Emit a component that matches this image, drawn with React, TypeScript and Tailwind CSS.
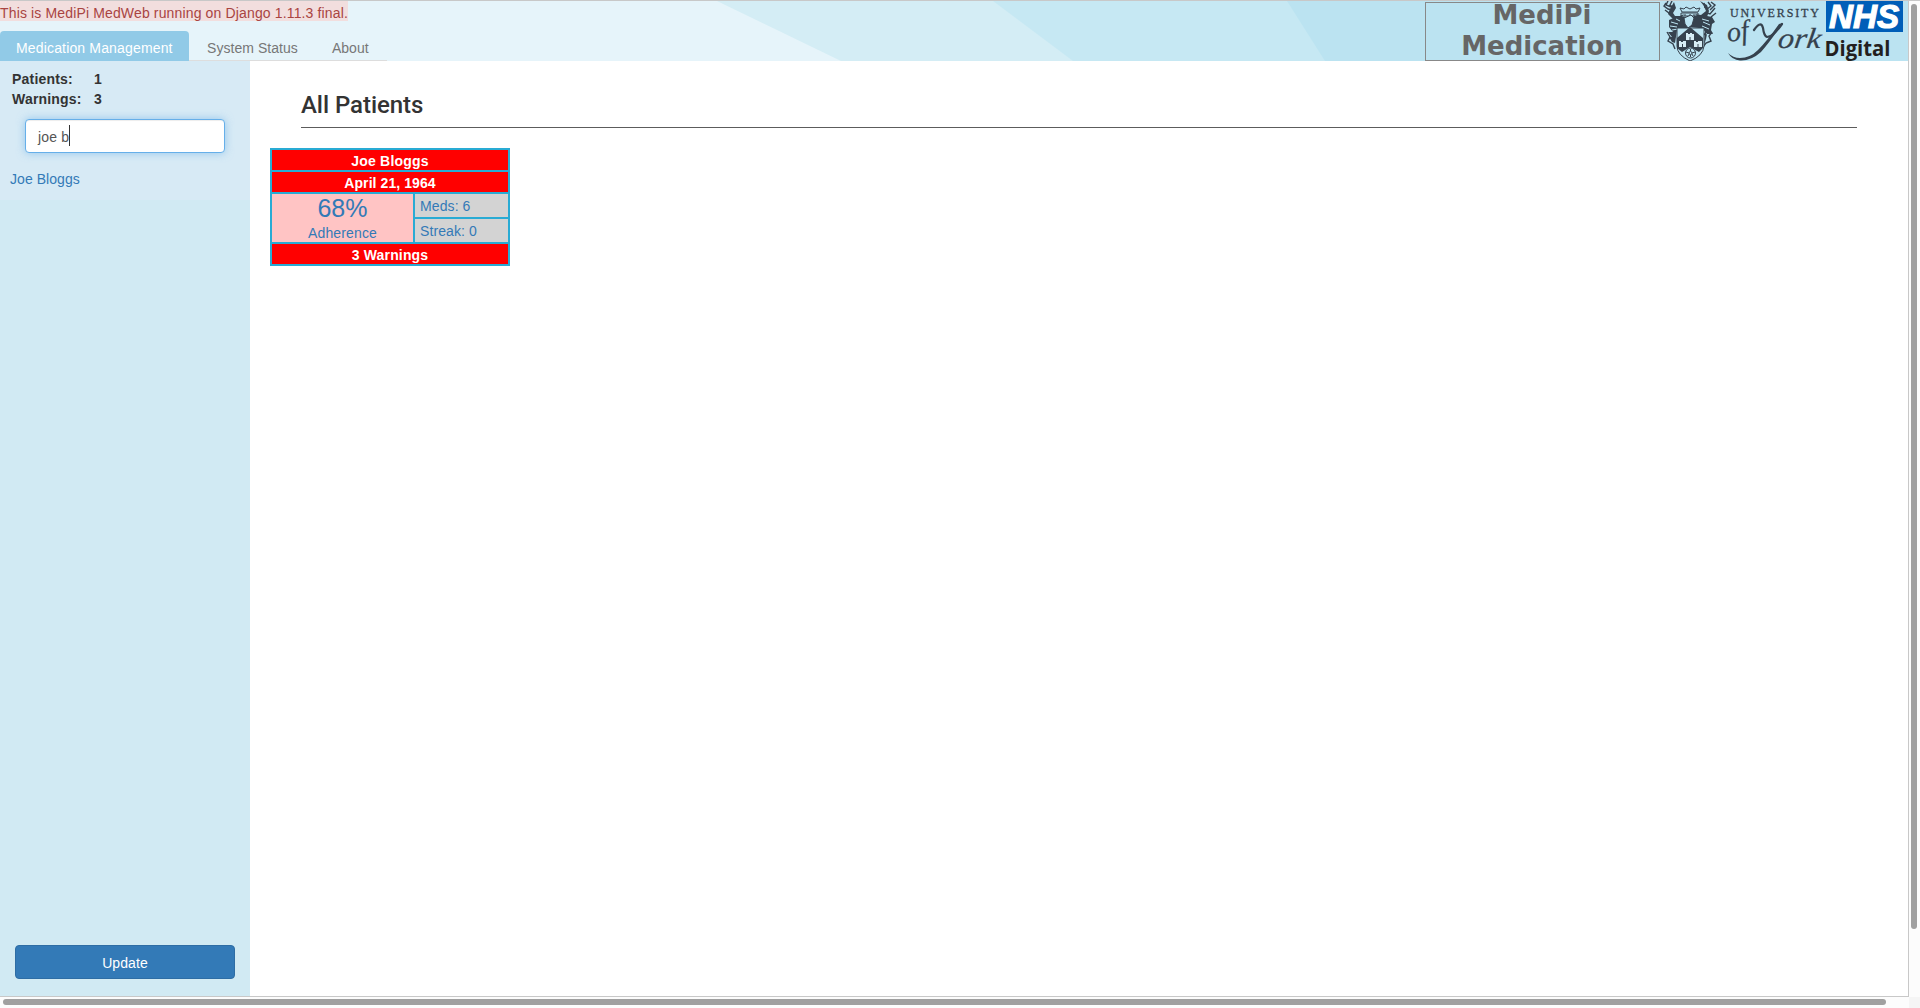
import React from "react";

function Crest() {
  return (
    <svg className="block h-[60px] w-[54px] shrink-0" viewBox="0 0 54 60" fill="none" stroke="#36424e" strokeWidth="1">
      <path d="M3 2 1 5l4 3 4 1M5 0 3 4l5 2M9 0 7 4l4 3M2 9l4 3 3 0M48 1l4 3-5 5M45 1l3 4-5 4M52 7l-5 6-3-1M53 12l-5 4M41 2l1 5" strokeWidth="1.4" />
      <path d="M11 1 7 8 5 13l5 5 8-1 3-4-4 2-5 0-2-3 3-5zM37 0l4 5 2 5-5 4-6-1 4 4 8-1 2-6-2-6z" fill="#36424e" stroke="none" />
      <path d="M6 19l9-4 8 1 4 5 4-6 8-1 10 2 3 5-3 2-1 6 2 4-6 0-1 5-2 6 1-14-6-3-9-1-4 2-9 1-2 13-3-1-3-5 3 0-4-5 5 0-4-5z" fill="#36424e" stroke="none" />
      <path d="M17 7l2 4h16l2-4-4 1-2-2-4 2-4-2-2 2zM18 12h17v3H18zM22 13v2M27 13v2M31 13v2" />
      <path d="M21 17l7-3 3 3-2 7-4 3-3-4z" fill="#bce4f2" />
      <path d="M8 21l7 2M7 25l7 1M9 29l6-1M39 18l7 2M40 21l7 3M39 25l7 3M40 31l4 2M13 18l4 2" stroke="#bce4f2" />
      <path d="M4 31l3 5-2 4 5 3 2 5M49 31l-3 4 2 5-5 2-3 4M8 33l4 4M45 29l-4 5" strokeWidth="1.4" />
      <path d="M14 27h27v18q-1 10-14 15Q14 54 14 45z" fill="#bce4f2" />
      <path d="M27 26 14 37v10h26V37zM14 47l5 4 8-5 9 5 4-4z" fill="#36424e" stroke="none" />
      <path d="M23 32h2v1h2v-1h2v1h2v6h-8zM16 40h2v1h2v-1h3v6h-7zM31 40h2v1h2v-1h4v6h-8z" fill="#d7edf5" stroke="none" />
      <path d="M27 36v3M19.500 43v3M35 43v3" />
      <circle cx="27.500" cy="52" r="5" fill="#bce4f2" />
      <circle cx="27.500" cy="52" r="1.500" />
      <path d="M27.500 48v2M27.500 54v2M23 51l3 1M32 51l-3 1M25 55l1-2M30 55l-1-2" />
    </svg>
  );
}

function YorkLogo() {
  return (
    <svg className="ml-[10px] block h-[60px] w-[97px] shrink-0 overflow-visible" viewBox="1726 1 97 60" fill="#36424e">
      <text x="1729" y="17" fontSize="12" fontFamily="Liberation Serif, serif" textLength="89" lengthAdjust="spacing" stroke="#36424e" strokeWidth="0.300">UNIVERSITY</text>
      <g fontFamily="Liberation Serif, serif" fontStyle="italic" stroke="#36424e" strokeWidth="0.200">
        <text transform="translate(1727 42) rotate(-8)" fontSize="28" textLength="22">of</text>
        <text transform="translate(1776 48) skewX(-8)" fontSize="29" textLength="43" lengthAdjust="spacingAndGlyphs">ork</text>
      </g>
      <path d="M1753 30Q1760 20 1762 28Q1763 36 1766 37Q1772 37 1781 24" fill="none" stroke="#36424e" strokeWidth="2.200" strokeLinecap="round" strokeLinejoin="round" />
      <path d="M1782 23Q1768 43 1760 52Q1750 61 1739 60.500Q1731 60 1727 53Q1732 58 1739 58Q1749 58 1757 50Q1766 41 1778 24Z" />
    </svg>
  );
}

function NhsLogo() {
  return (
    <svg className="ml-[2px] block h-[60px] w-[78px] shrink-0 overflow-visible" viewBox="0 0 78 60">
      <rect width="77" height="31" fill="#005eb8" />
      <text x="3" y="27" fontFamily="Liberation Sans, sans-serif" fontWeight="bold" fontStyle="italic" fontSize="34" fill="white" stroke="white" strokeWidth="1.200" textLength="70" lengthAdjust="spacingAndGlyphs">NHS</text>
      <text x="-1.500" y="55" fontFamily="Open Sans, sans-serif" fontWeight="bold" fontSize="21.500" fill="#231f20" textLength="66" lengthAdjust="spacingAndGlyphs">Digital</text>
    </svg>
  );
}

function Header() {
  return (
    <header className="relative flex h-[60px] shrink-0 justify-between bg-[#e6f4fa]">
      <svg className="absolute inset-0 h-full w-full" viewBox="0 0 1908 60" preserveAspectRatio="none">
        <path d="M717 0H1908V60H841Z" fill="#d4edf5" />
        <path d="M993 0H1908V60H1073Z" fill="#c6e8f3" />
        <path d="M1287 0H1908V60H1325Z" fill="#bbe3f1" />
      </svg>
      <div className="relative flex flex-col items-start justify-between">
        <div className="h-5 w-[348px] whitespace-nowrap bg-[#f2dede] leading-[24px] tracking-[0.145px] text-[#a94442]">This is MediPi MedWeb running on Django 1.11.3 final.</div>
        <nav className="flex h-[30px] w-[387px] leading-[34px] text-[#777]">
          <a className="w-[189px] rounded-t bg-[#91cae7] pl-4 tracking-[0.16px] text-white">Medication Management</a>
          <a className="w-[125px] border-b border-[#ddd] pl-[18px] tracking-[0.05px]">System Status</a>
          <a className="flex-1 border-b border-[#ddd] pl-[18px]">About</a>
        </nav>
      </div>
      <div className="relative flex">
        <div className="mt-px flex h-[59px] w-[235px] flex-col items-center justify-center border border-[#888] pb-[2px] pr-px font-['DejaVu_Sans'] text-[26px] font-bold leading-[31px] text-[#666]">
          <div>MediPi</div>
          <div>Medication</div>
        </div>
        <div className="ml-[3px] flex w-[245px]">
          <Crest />
          <YorkLogo />
          <NhsLogo />
        </div>
      </div>
    </header>
  );
}

function Sidebar() {
  return (
    <aside className="flex w-[250px] shrink-0 flex-col justify-between bg-[#d1eaf3]">
      <div className="h-[139px] bg-[#d7eaf5] pt-2">
        <div className="grid grid-cols-[82px_1fr] pl-3 font-bold leading-5 tracking-[0.2px] text-[#333]">
          <span>Patients:</span><span>1</span>
          <span>Warnings:</span><span>3</span>
        </div>
        <div className="ml-[25px] mt-[10px] flex h-[34px] w-[200px] items-center rounded border border-[#66afe9] bg-white pl-3 pt-[2px] tracking-[0.15px] text-[#555] shadow-[inset_0_1px_1px_rgba(0,0,0,.075),0_0_8px_rgba(102,175,233,.6)]">
          joe b<span className="-mt-[3px] h-[21px] w-px bg-[#333]" />
        </div>
        <a className="ml-[10px] mt-4 block leading-5 tracking-[0.05px] text-[#337ab7]">Joe Bloggs</a>
      </div>
      <button className="mx-[15px] mb-[17px] h-[34px] rounded border border-[#2e6da4] bg-[#337ab7] pt-[2px] tracking-[0.1px] text-white">Update</button>
    </aside>
  );
}

function PatientCard() {
  return (
    <div className="ml-5 mt-[20px] grid w-[240px] grid-cols-[141px_93px] grid-rows-[20px_20px_23px_23px_20px] gap-[2px] border-2 border-[#29abd4] bg-[#29abd4] text-[#337ab7]">
      <div className="col-span-2 bg-[red] text-center font-bold leading-[22px] tracking-[0.2px] text-white">Joe Bloggs</div>
      <div className="col-span-2 bg-[red] text-center font-bold leading-[22px] tracking-[0.08px] text-white">April 21, 1964</div>
      <div className="row-span-2 bg-[#ffc4c4] text-center">
        <div className="h-7 text-[25px] leading-[29px]">68%</div>
        <div className="leading-[22px] tracking-[0.15px]">Adherence</div>
      </div>
      <div className="bg-[#d3d3d3] pl-[5px] leading-6 tracking-[0.1px]">Meds: 6</div>
      <div className="bg-[#d3d3d3] pl-[5px] leading-6 tracking-[0.1px]">Streak: 0</div>
      <div className="col-span-2 bg-[red] text-center font-bold leading-[22px] tracking-[0.15px] text-white">3 Warnings</div>
    </div>
  );
}

export default function App() {
  return (
    <div className="grid h-[1008px] w-[1920px] grid-cols-[1909px_11px] grid-rows-[997px_11px] overflow-hidden bg-[#fcfcfc] font-['Liberation_Sans',sans-serif] text-[14px] text-[#333]">
      <div className="flex flex-col border-b border-r border-t border-[#c8c8c8] bg-white">
        <Header />
        <div className="flex min-h-0 flex-1">
          <Sidebar />
          <main className="flex-1">
            <h1 className="ml-[51px] mr-[51px] h-[67px] border-b border-[#5c5c5c] pt-[28px] font-[Roboto] text-[24px] font-medium leading-8 tracking-[-0.05px]">All Patients</h1>
            <PatientCard />
          </main>
        </div>
      </div>
      <div className="border-t border-[#c8c8c8] pl-[2px] pt-[3px]"><div className="h-[925px] w-[6px] rounded-full bg-[#a0a0a0]" /></div>
      <div className="pl-[3px] pt-[2px]"><div className="h-[6px] w-[1883px] rounded-full bg-[#a0a0a0]" /></div>
      <div className="bg-[#f5f5f5]" />
    </div>
  );
}
